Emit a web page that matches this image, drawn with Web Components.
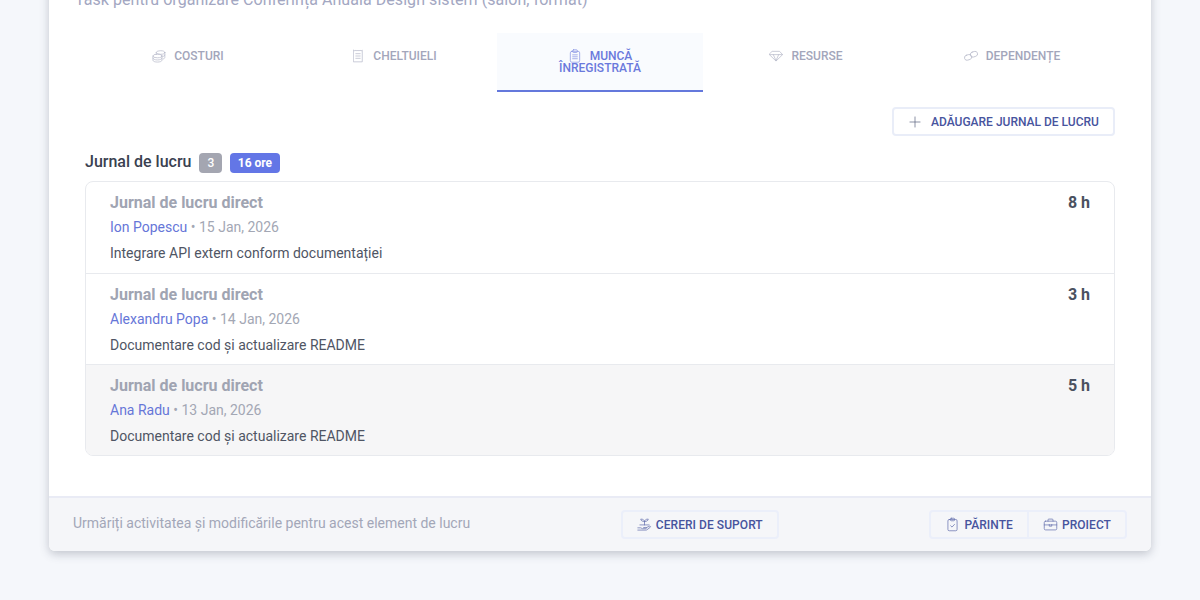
<!DOCTYPE html>
<html>
<head>
<meta charset="utf-8">
<style>
html, body { margin: 0; height: 600px; overflow: hidden; background: #f5f7fb; font-family: Roboto, "Liberation Sans", sans-serif; }
</style>
</head>
<body>
<work-card>
  <p slot="lead">Task pentru organizare Conferința Anuală Design sistem (salon, format)</p>
  <tab-bar slot="tabs">
    <tab-item icon="coins">COSTURI</tab-item>
    <tab-item icon="receipt">CHELTUIELI</tab-item>
    <tab-item icon="clipboard" active>MUNCĂ ÎNREGISTRATĂ</tab-item>
    <tab-item icon="gem">RESURSE</tab-item>
    <tab-item icon="link">DEPENDENȚE</tab-item>
  </tab-bar>
  <work-log slot="body">
    <log-row name="Ion Popescu" date="15 Jan, 2026" hours="8 h">Integrare API extern conform documentației</log-row>
    <log-row name="Alexandru Popa" date="14 Jan, 2026" hours="3 h">Documentare cod și actualizare README</log-row>
    <log-row name="Ana Radu" date="13 Jan, 2026" hours="5 h" hover>Documentare cod și actualizare README</log-row>
  </work-log>
  <card-footer slot="footer"></card-footer>
</work-card>

<script>
const ICONS = {
  coins: '<ellipse cx="11" cy="4.500" rx="5.500" ry="2.300"/><path d="M16.500 4.500v6.500c0 .8-.9 1.500-2.300 1.900M16.500 7.700c0 .8-.9 1.500-2.300 1.900M5.500 4.500v2.500"/><ellipse cx="7" cy="9" rx="5.800" ry="2.300"/><path d="M1.200 9v5.500c0 1.300 2.600 2.300 5.800 2.300s5.800-1 5.800-2.300V9M1.200 11.800c0 1.300 2.600 2.300 5.800 2.300s5.800-1 5.800-2.300"/>',
  receipt: '<path d="M3.500 1.500l1.600 1 1.300-1 1.300 1 1.300-1 1.300 1 1.300-1 1.300 1 1.600-1v15h-11z"/><path d="M6.200 6h5.600M6.200 9h5.600M6.200 12h5.600"/>',
  clipboard: '<rect x="3" y="3" width="12" height="14" rx="2"/><rect x="6" y="1" width="6" height="3.500" rx="1.200"/><path d="M6 7.500h6M6 10h6M6 12.500h6"/>',
  gem: '<path d="M4.500 3h9l4 4.200L9 15.500.5 7.200z"/><path d="M1 7.200h16M5.500 7.200L9 15M12.500 7.200L9 15"/>',
  link: '<rect x="8" y="3.500" width="9.500" height="6.500" rx="3.250" transform="rotate(-18 12.700 6.700)"/><rect x=".5" y="7.500" width="9.500" height="6.500" rx="3.250" transform="rotate(-18 5.300 10.700)"/>',
  plus: '<path d="M9 2.500v13M2.500 9h13"/>',
  plant: '<path d="M9 9.500V5.500M9 5.500C9 3.800 7.500 2.500 4.500 2.500 4.500 4.500 6.800 5.500 9 5.500zM9 5.500c0-1.700 1.500-3 4.500-3 0 2-2.300 3-4.500 3z"/><path d="M3.500 9.500h11"/><path d="M1 13h3.500l2 1h4c1 0 1-1.400 0-1.400H8M11 12.800l4-1.800c1-.4 1.700.7.800 1.400l-3.800 2.900c-.4.300-.8.400-1.300.400H1"/>',
  clipcheck: '<rect x="3.500" y="3" width="11" height="13.500" rx="1.600"/><rect x="6.500" y="1.500" width="5" height="3" rx="1"/><path d="M6.800 10.500l1.600 1.600 3-3.200"/>',
  briefcase: '<rect x="1.500" y="5" width="15" height="10.500" rx="1.600"/><path d="M6 5V3.500a1 1 0 0 1 1-1h4a1 1 0 0 1 1 1V5M1.500 9.500h15M7.500 9v2h3V9"/>'
};
const svgIcon = (name, size) => `<svg viewBox="0 0 18 18" width="${size}" height="${size}" fill="none" stroke="currentColor" stroke-width=".9" stroke-linecap="round" stroke-linejoin="round">${ICONS[name]}</svg>`;

class WorkCard extends HTMLElement {
  constructor() {
    super();
    this.attachShadow({ mode: 'open' });
    this.shadowRoot.innerHTML = `
      <style>
        :host { width: 1102px; height: 580px; margin: -29px auto 0; background: #fff; border-radius: 6px; box-shadow: 0 3px 10px rgba(60,70,90,.28); overflow: hidden; display: flex; flex-direction: column; }
        .top { flex: 1; padding: 17px 36px 0; }
        ::slotted(p) { margin: 0 0 0 -10px; font-size: 16px; line-height: 24px; color: #a3a7c2; letter-spacing: .06px; }
      </style>
      <div class="top">
        <slot name="lead"></slot>
        <slot name="tabs"></slot>
        <slot name="body"></slot>
      </div>
      <slot name="footer"></slot>`;
  }
}

class TabBar extends HTMLElement {
  constructor() {
    super();
    this.attachShadow({ mode: 'open' });
    this.shadowRoot.innerHTML = `
      <style>:host { display: grid; grid-template-columns: repeat(5, 1fr); width: 1030px; margin-top: 21px; }</style>
      <slot></slot>`;
  }
}

class TabItem extends HTMLElement {
  constructor() {
    super();
    this.attachShadow({ mode: 'open' });
    this.shadowRoot.innerHTML = `
      <style>
        :host { display: block; height: 59px; color: #a3a6bb; font-size: 12px; font-weight: 500; line-height: 12px; text-align: center; box-sizing: border-box; padding-top: 17px; }
        :host([active]) { color: #6a79dc; background: #f9fbfe; border-bottom: 2px solid #6478dc; }
        svg { vertical-align: 0; margin: -3px 8px -3px 0; opacity: .8; }
        .t { padding: 0 30px; display: block; }
      </style>
      <span class="t">${svgIcon(this.getAttribute('icon'), 14)}<slot></slot></span>`;
  }
}

class WorkLog extends HTMLElement {
  constructor() {
    super();
    this.attachShadow({ mode: 'open' });
    this.shadowRoot.innerHTML = `
      <style>
        :host { display: block; width: 1030px; }
        .bar { display: flex; justify-content: flex-end; margin-top: 15px; }
        button { all: unset; box-sizing: border-box; width: 223px; height: 29px; border: 2px solid #e9edf8; border-radius: 4px; color: #47549e; font-size: 12px; font-weight: 500; display: flex; align-items: center; justify-content: center; gap: 9px; }
        button svg { color: #5a6180; }
        .head { display: flex; align-items: center; margin-top: 15px; height: 24px; }
        h3 { margin: 0 0 4px; font-size: 16px; font-weight: 500; color: #3a4150; }
        .badge { color: #fff; font-size: 12px; font-weight: 500; height: 20px; line-height: 20px; border-radius: 4px; padding: 0 8px; }
        .gray { background: #a4a6b1; margin-left: 8px; }
        .blue { background: #6376e6; margin-left: 8px; font-weight: 700; padding: 0 7.500px; }
        .list { margin-top: 6px; border: 1px solid #e8eaee; border-radius: 8px; overflow: hidden; }
      </style>
      <div class="bar"><button>${svgIcon('plus', 14)}ADĂUGARE JURNAL DE LUCRU</button></div>
      <div class="head"><h3>Jurnal de lucru</h3><span class="badge gray">3</span><span class="badge blue">16 ore</span></div>
      <div class="list"><slot></slot></div>`;
  }
}

class LogRow extends HTMLElement {
  constructor() {
    super();
    this.attachShadow({ mode: 'open' });
    this.shadowRoot.innerHTML = `
      <style>
        :host { display: block; box-sizing: border-box; height: 91px; padding: 11px 24px 0; border-top: 1px solid #e8eaee; font-size: 14px; color: #4f5564; }
        :host(:first-child) { border-top: 0; }
        :host([hover]) { background: #f6f6f7; }
        .row { display: flex; justify-content: space-between; font-size: 16px; line-height: 20px; font-weight: 700; }
        .title { color: #a0a4b2; }
        .hours { color: #4a5160; }
        .meta { margin-top: 4px; line-height: 20px; color: #a3a7b4; }
        .meta b { font-weight: 400; color: #6676d8; }
        .desc { margin-top: 6px; line-height: 20px; }
      </style>
      <div class="row"><span class="title">Jurnal de lucru direct</span><span class="hours">${this.getAttribute('hours')}</span></div>
      <div class="meta"><b>${this.getAttribute('name')}</b> • ${this.getAttribute('date')}</div>
      <div class="desc"><slot></slot></div>`;
  }
}

class CardFooter extends HTMLElement {
  constructor() {
    super();
    this.attachShadow({ mode: 'open' });
    this.shadowRoot.innerHTML = `
      <style>
        :host { display: flex; justify-content: space-between; align-items: center; box-sizing: border-box; height: 55px; padding: 0 24px; background: #f5f6f9; border-top: 2px solid #e9ebf5; }
        .note { font-size: 14px; color: #a3a7b8; margin-bottom: 3px; }
        .btn { box-sizing: border-box; height: 29px; display: inline-flex; align-items: center; gap: 4px; padding: 0 14px; border: 2px solid #ebeffa; border-radius: 4px; color: #47549e; font-size: 12px; font-weight: 500; letter-spacing: .06px; }
        .btn svg { opacity: .8; }
        .right { display: flex; }
        .right .btn:first-child { border-radius: 4px 0 0 4px; }
        .right .btn:last-child { border-radius: 0 4px 4px 0; border-left: 0; }
      </style>
      <span class="note">Urmăriți activitatea și modificările pentru acest element de lucru</span>
      <span class="btn">${svgIcon('plant', 15)}CERERI DE SUPORT</span>
      <div class="right"><span class="btn">${svgIcon('clipcheck', 15)}PĂRINTE</span><span class="btn">${svgIcon('briefcase', 15)}PROIECT</span></div>`;
  }
}

customElements.define('work-card', WorkCard);
customElements.define('tab-bar', TabBar);
customElements.define('tab-item', TabItem);
customElements.define('work-log', WorkLog);
customElements.define('log-row', LogRow);
customElements.define('card-footer', CardFooter);
</script>
</body>
</html>
